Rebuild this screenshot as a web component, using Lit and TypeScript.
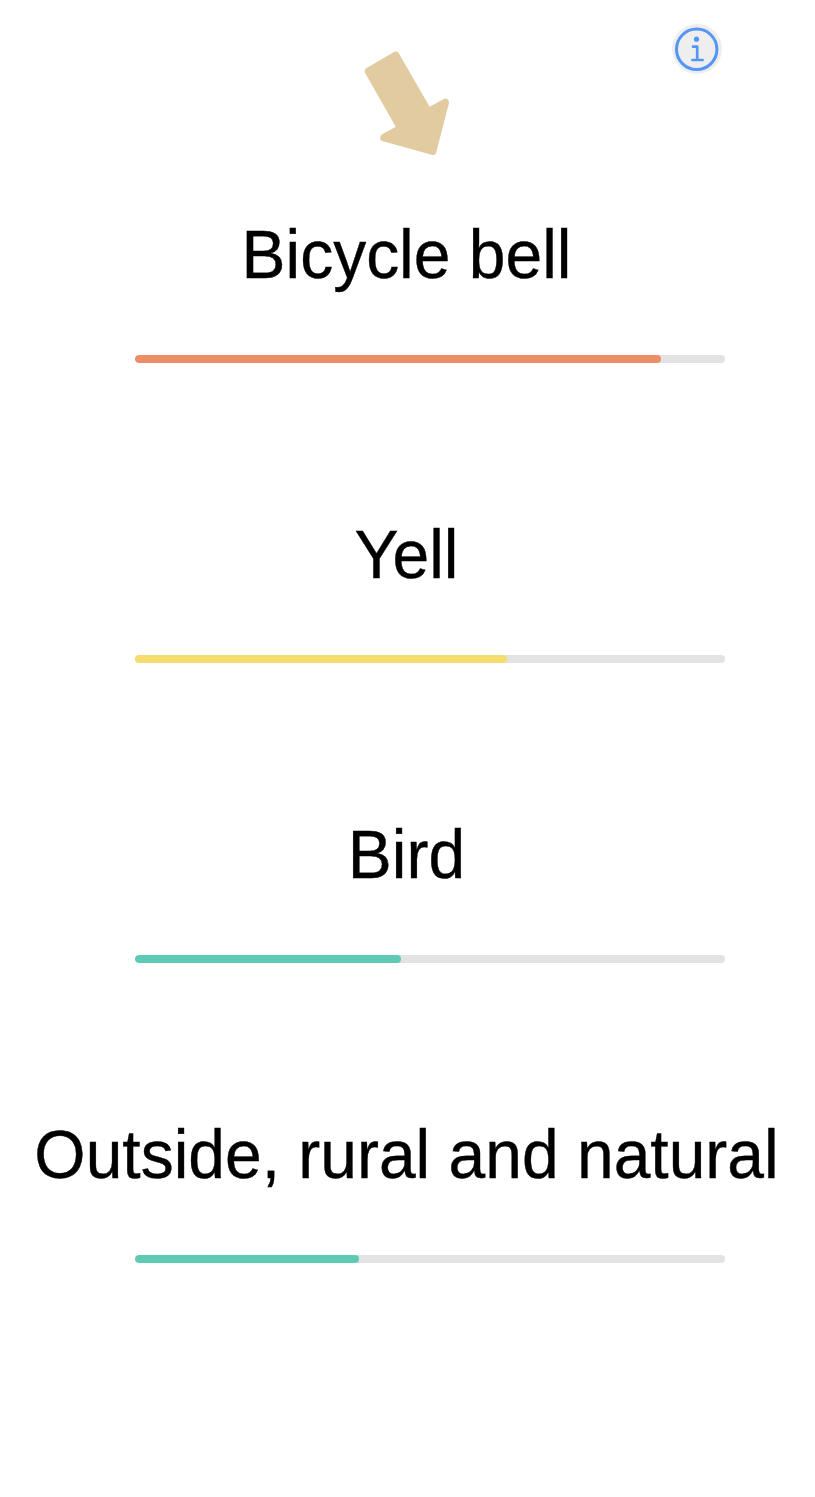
import { LitElement, html, css } from "lit";
import { customElement, property } from "lit/decorators.js";

@customElement("sound-level")
class SoundLevel extends LitElement {
  @property() label = "";
  @property() color = "";
  @property({ type: Number }) value = 0;

  static styles = css`
    :host { display: block; height: 300px; }
    .label {
      height: 80px;
      line-height: 80px;
      font-size: 68px;
      font-weight: 400;
      text-align: center;
      white-space: nowrap;
      margin: 0 2px 0 0;
      transform: scaleX(0.97);
      -webkit-text-stroke: 0.4px #000;
    }
    .track {
      width: 590px;
      height: 8px;
      margin: 61px 0 0 135px;
      border-radius: 4px;
      background: #e3e3e4;
      overflow: hidden;
    }
    .fill { height: 8px; border-radius: 4px; }
  `;

  render() {
    return html`
      <h2 class="label">${this.label}</h2>
      <div class="track">
        <div class="fill" style="width:${this.value}px;background:${this.color}"></div>
      </div>
    `;
  }
}

@customElement("app-root")
class AppRoot extends LitElement {
  static styles = css`
    :host {
      display: block;
      box-sizing: border-box;
      height: 1497px;
      background: #fff;
      color: #000;
      font-family: "Liberation Sans", Arial, sans-serif;
      overflow: hidden;
    }
    .top {
      display: flex;
      align-items: flex-start;
      height: 190px;
      padding: 24px 0 0 360px;
      gap: 217px;
      box-sizing: border-box;
    }
    .arrow { display: block; margin-top: 21px; flex: none; }
    .info {
      display: block;
      flex: none;
      width: 50px;
      height: 50px;
      padding: 0;
      border: 0;
      border-radius: 50%;
      background: #eee;
    }
    .info svg { display: block; }
    .levels { padding-top: 24px; }
  `;

  private levels = [
    { label: "Bicycle bell", value: 526, color: "#ed8e66" },
    { label: "Yell", value: 372, color: "#f5dc6d" },
    { label: "Bird", value: 266, color: "#5dcbb3" },
    { label: "Outside, rural and natural", value: 224, color: "#5dcbb3" },
  ];

  render() {
    return html`
      <header class="top">
        <svg class="arrow" width="95" height="115" viewBox="360 45 95 115">
          <path
            d="M368.6 71.3 395.6 55.5 428.2 111.8 445.2 102.6 432.6 151.2 384 137.7 401 128.4Z"
            fill="#e2cba0" stroke="#e2cba0" stroke-width="7.6" stroke-linejoin="round"
          />
        </svg>
        <button class="info" aria-label="Info">
          <svg width="50" height="50" viewBox="0 0 50 50" fill="none" stroke="#5596f5">
            <circle cx="24.7" cy="25.3" r="20.2" stroke-width="3" />
            <circle cx="24.5" cy="15.2" r="2.6" fill="#5596f5" stroke="none" />
            <path d="M21 22.7h4.2V36M20.4 36h10.2" stroke-width="2.7" stroke-linecap="round" stroke-linejoin="round" />
          </svg>
        </button>
      </header>
      <main class="levels">
        ${this.levels.map(
          (l) => html`<sound-level .label=${l.label} .value=${l.value} .color=${l.color}></sound-level>`
        )}
      </main>
    `;
  }
}
